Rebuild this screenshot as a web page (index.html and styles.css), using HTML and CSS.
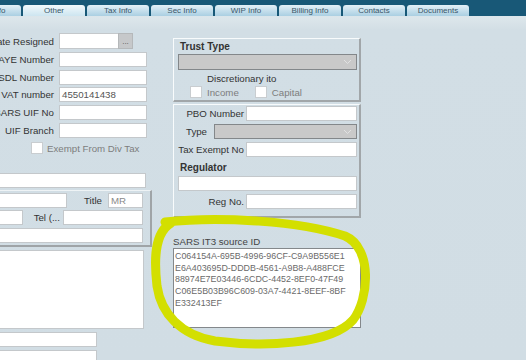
FILE: index.html
```html
<!DOCTYPE html>
<html lang="en">
<head>
    <meta charset="UTF-8">
    <meta name="viewport" content="width=device-width, initial-scale=1.0">
    <title>Client - Other</title>
    <link rel="stylesheet" href="styles.css">
</head>
<body>

    <div class="tabbar">
        <div class="tab">Gen Info</div>
        <div class="tab active">Other</div>
        <div class="tab">Tax Info</div>
        <div class="tab">Sec Info</div>
        <div class="tab">WIP Info</div>
        <div class="tab">Billing Info</div>
        <div class="tab">Contacts</div>
        <div class="tab">Documents</div>
    </div>

    <div class="page">
        <!-- left column, cut off on the left side -->
        <div class="left">
            <div class="fields">
                <div class="field-row first">
                    <label>Date Resigned</label>
                    <div class="date-box">
                        <span class="input date-input"></span>
                        <span class="dots">...</span>
                    </div>
                </div>
                <div class="field-row">
                    <label>PAYE Number</label>
                    <span class="input"></span>
                </div>
                <div class="field-row">
                    <label>SDL Number</label>
                    <span class="input"></span>
                </div>
                <div class="field-row">
                    <label>VAT number</label>
                    <span class="input">4550141438</span>
                </div>
                <div class="field-row">
                    <label>SARS UIF No</label>
                    <span class="input"></span>
                </div>
                <div class="field-row">
                    <label>UIF Branch</label>
                    <span class="input"></span>
                </div>
            </div>

            <div class="check-row">
                <span class="checkbox"></span>
                <span class="muted">Exempt From Div Tax</span>
            </div>

            <span class="input wide"></span>

            <div class="group">
                <div class="group-row row-title">
                    <span class="input"></span>
                    <label>Title</label>
                    <span class="input grey-text">MR</span>
                </div>
                <div class="group-row row-tel">
                    <span class="input"></span>
                    <label>Tel (...</label>
                    <span class="input"></span>
                </div>
                <div class="group-row">
                    <span class="input"></span>
                </div>
            </div>

            <span class="input memo"></span>
            <span class="input short"></span>
            <span class="input short"></span>
        </div>

        <!-- right column -->
        <div class="right">
            <div class="box trust">
                <div class="box-title">Trust Type</div>
                <div class="select">
                    <svg width="9" height="6" viewBox="0 0 9 6"><path d="M1 1 L4.5 4.5 L8 1" fill="none" stroke="#e2e2e2" stroke-width="1"/></svg>
                </div>
                <div class="disc">Discretionary ito</div>
                <div class="disc-checks">
                    <span class="checkbox"></span><span class="muted">Income</span>
                    <span class="checkbox cap"></span><span class="muted">Capital</span>
                </div>
            </div>

            <div class="box pbo">
                <div class="pbo-row">
                    <label>PBO Number</label>
                    <span class="input"></span>
                </div>
                <div class="type-row">
                    <label>Type</label>
                    <div class="select">
                        <svg width="9" height="6" viewBox="0 0 9 6"><path d="M1 1 L4.5 4.5 L8 1" fill="none" stroke="#e2e2e2" stroke-width="1"/></svg>
                    </div>
                </div>
                <div class="pbo-row">
                    <label>Tax Exempt No</label>
                    <span class="input"></span>
                </div>
                <div class="box-title reg-title">Regulator</div>
                <span class="input reg-input"></span>
                <div class="pbo-row">
                    <label>Reg No.</label>
                    <span class="input"></span>
                </div>
            </div>

            <div class="it3-label">SARS IT3 source ID</div>
            <div class="it3-text">
                <div>C064154A-695B-4996-96CF-C9A9B556E1</div>
                <div>E6A403695D-DDDB-4561-A9B8-A488FCE</div>
                <div>88974E7E03446-6CDC-4452-8EF0-47F49</div>
                <div>C06E5B03B96C609-03A7-4421-8EEF-8BF</div>
                <div>E332413EF</div>
            </div>
        </div>
    </div>

    <!-- hand drawn highlight drawn over the screenshot -->
    <svg class="marker" width="526" height="360" viewBox="0 0 526 360">
        <path d="M165 222 C 220 216, 300 221, 345 236 C 373 248, 369 300, 353 320 C 331 345, 262 347, 215 341 C 180 335, 161 313, 157 286 C 154 260, 154 233, 171 223"
              fill="none" stroke="#d3df00" stroke-width="9" stroke-linecap="round"/>
    </svg>

</body>
</html>
```

FILE: styles.css
```css
body {
    margin: 0;
    width: 526px;
    height: 360px;
    overflow: hidden;
    position: relative;
    background: linear-gradient(#d2dee5 0px, #dce6eb 18px, #d2dee5 30px, #d1dde4 100%);
    font-family: 'Liberation Sans', Arial, sans-serif;
    font-size: 9.7px;
    color: #333;
}

label {
    white-space: nowrap;
}

/* tabs */
.tabbar {
    height: 16px;
    background-color: #185877;
    display: flex;
    align-items: flex-end;
    gap: 2px;
    margin-left: -41px;
}

.tab {
    width: 62px;
    height: 11px;
    flex: none;
    box-sizing: border-box;
    border-radius: 3px 3px 0 0;
    background: linear-gradient(#e3f0f7, #aacfe2);
    color: #3a5668;
    font-size: 8px;
    line-height: 11px;
    text-align: center;
}

.tab.active {
    background: linear-gradient(#f2f9fc, #cde5f0);
}

.page {
    display: flex;
}

/* inputs */
.input {
    display: block;
    height: 15px;
    box-sizing: border-box;
    background-color: #fff;
    border: 1px solid #c4c8cb;
    padding: 0 2px;
    line-height: 13px;
    color: #555;
    white-space: nowrap;
    overflow: hidden;
}

.checkbox {
    display: inline-block;
    width: 12px;
    height: 12px;
    box-sizing: border-box;
    background-color: #fff;
    border: 1px solid #c9cdd0;
    flex: none;
}

.muted {
    color: #7d7d7d;
}

.grey-text {
    color: #8a8a8a;
}

/* left column */
.left {
    margin-left: -60px;
    width: 212px;
    flex: none;
    padding-top: 17px;
}

.fields {
    display: flex;
    flex-direction: column;
    gap: 2.6px;
}

.field-row {
    display: grid;
    grid-template-columns: 114px 88px;
    column-gap: 5px;
    align-items: center;
    height: 15px;
}

.field-row.first {
    height: 16px;
    margin-bottom: 0.7px;
}

.field-row label {
    text-align: right;
}

.date-box {
    display: flex;
    height: 16px;
    width: 74px;
}

.date-input {
    height: 16px;
    width: 59px;
    border-right: none;
}

.dots {
    width: 15px;
    height: 16px;
    box-sizing: border-box;
    background-color: #c6c8ca;
    border: 1px solid #b5b8ba;
    text-align: center;
    line-height: 16px;
    font-size: 8px;
    color: #555;
}

.check-row {
    display: flex;
    align-items: center;
    gap: 4px;
    padding-left: 91px;
    margin-top: 4.3px;
    height: 13px;
}

.input.wide {
    width: 206px;
    margin-top: 18px;
}

.group {
    margin-top: 2px;
    width: 212px;
    box-sizing: border-box;
    border-style: solid;
    border-width: 1px 2px 2px 0;
    border-color: #eef3f5 #9fa4a7 #9fa4a7;
    padding: 2px 7px 2px 0;
    display: flex;
    flex-direction: column;
    gap: 2.5px;
}

.group-row {
    display: grid;
    grid-template-columns: 1fr;
    align-items: center;
}

.group-row.row-title {
    grid-template-columns: 1fr 41px 35px;
}

.group-row.row-tel {
    grid-template-columns: 1fr 40px 80px;
}

.group-row label {
    text-align: right;
    padding-right: 6px;
}

.group-row.row-tel label {
    padding-right: 3px;
}

.input.memo {
    width: 204px;
    height: 79px;
    margin-top: 3px;
}

.input.short {
    width: 157px;
    margin-top: 3px;
}

/* right column */
.right {
    margin-left: 21px;
    width: 188px;
    flex: none;
    padding-top: 22px;
}

.box {
    box-sizing: border-box;
    border-style: solid;
    border-width: 1px 2px 2px 1px;
    border-color: #f8fbfc #a1a6a9 #a1a6a9 #f8fbfc;
}

.box-title {
    font-weight: bold;
    font-size: 10px;
    color: #333;
    padding-left: 6px;
    height: 14px;
    line-height: 14px;
}

.trust {
    height: 64px;
    padding-top: 1px;
}

.select {
    height: 16px;
    box-sizing: border-box;
    background-color: #c9c9c9;
    border: 1px solid #83878a;
    display: flex;
    align-items: center;
    justify-content: flex-end;
    padding-right: 4px;
}

.trust .select {
    margin: 0 2px 0 4px;
}

.disc {
    padding-left: 33px;
    margin-top: 3px;
    height: 11px;
    line-height: 11px;
}

.disc-checks {
    display: flex;
    align-items: center;
    margin-top: 2px;
    padding-left: 16px;
    gap: 5px;
}

.disc-checks .checkbox.cap {
    margin-left: 11px;
}

.pbo {
    margin-top: 2px;
    height: 114px;
    padding: 1px 2px 0 0;
}

.pbo-row {
    display: grid;
    grid-template-columns: 70px 111px;
    column-gap: 2px;
    align-items: center;
    margin-bottom: 3px;
}

.pbo-row label {
    text-align: right;
}

.type-row {
    display: flex;
    align-items: center;
    margin-bottom: 3px;
}

.type-row label {
    padding-left: 12px;
    width: 28px;
}

.type-row .select {
    width: 143px;
    height: 15px;
}

.reg-title {
    margin-top: 1px;
    height: 16px;
    line-height: 16px;
}

.input.reg-input {
    margin: 0 0 3px 4px;
    height: 15px;
}

.it3-label {
    margin-top: 18px;
    height: 11px;
    line-height: 11px;
    color: #444;
}

.it3-text {
    height: 80px;
    box-sizing: border-box;
    margin-top: 1px;
    background-color: #fff;
    border: 1px solid #84888b;
    padding: 2px 1px;
    font-size: 8.9px;
    line-height: 11.7px;
    color: #6a6a6a;
    white-space: nowrap;
    overflow: hidden;
}

/* yellow highlight over the screenshot */
.marker {
    position: absolute;
    left: 0;
    top: 0;
    pointer-events: none;
}
```
